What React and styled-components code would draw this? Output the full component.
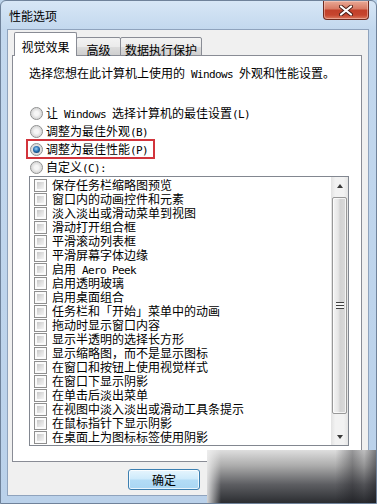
import React from "react";
import styled, { createGlobalStyle, css } from "styled-components";

const GlobalStyle = createGlobalStyle`
  html, body {
    margin: 0;
    padding: 0;
  }
  body {
    width: 377px;
    height: 504px;
    overflow: hidden;
    background: #bcd3ea;
    font-family: "Noto Sans CJK SC", sans-serif;
    font-size: 12px;
    color: #000;
  }
`;

const items = [
    "保存任务栏缩略图预览",
    "窗口内的动画控件和元素",
    "淡入淡出或滑动菜单到视图",
    "滑动打开组合框",
    "平滑滚动列表框",
    "平滑屏幕字体边缘",
    ["启用", " Aero Peek"],
    "启用透明玻璃",
    "启用桌面组合",
    "任务栏和「开始」菜单中的动画",
    "拖动时显示窗口内容",
    "显示半透明的选择长方形",
    "显示缩略图，而不是显示图标",
    "在窗口和按钮上使用视觉样式",
    "在窗口下显示阴影",
    "在单击后淡出菜单",
    "在视图中淡入淡出或滑动工具条提示",
    "在鼠标指针下显示阴影",
    "在桌面上为图标标签使用阴影",
];

function App() {
    return (
        <>
            <GlobalStyle />
            <Window>
                <TitleBar>
                    <Title>性能选项</Title>
                    <CloseButton>
                        <svg width="14" height="11" viewBox="0 0 14 11">
                            <path d="M2 1.5 L12 9.5 M12 1.5 L2 9.5" stroke="#4a1e16" strokeWidth="4" strokeLinecap="round" />
                            <path d="M2 1.5 L12 9.5 M12 1.5 L2 9.5" stroke="#ffffff" strokeWidth="2.2" strokeLinecap="round" />
                        </svg>
                    </CloseButton>
                </TitleBar>
                <Client>
                    <TabStrip>
                        <Tab active width={63}>视觉效果</Tab>
                        <Tab width={45}>高级</Tab>
                        <Tab width={82}>数据执行保护</Tab>
                    </TabStrip>
                    <Panel>
                        <Description>
                            选择您想在此计算机上使用的<Latin> Windows </Latin>外观和性能设置。
                        </Description>
                        <RadioGroup>
                            <RadioRow>
                                <Radio />
                                <Label>让<Latin> Windows </Latin>选择计算机的最佳设置<Latin>(L)</Latin></Label>
                            </RadioRow>
                            <RadioRow>
                                <Radio />
                                <Label>调整为最佳外观<Latin>(B)</Latin></Label>
                            </RadioRow>
                            <RadioRow highlight>
                                <Radio checked />
                                <Label>调整为最佳性能<Latin>(P)</Latin></Label>
                            </RadioRow>
                            <RadioRow>
                                <Radio />
                                <Label>自定义<Latin>(C):</Latin></Label>
                            </RadioRow>
                        </RadioGroup>
                        <ListBox>
                            <Items>
                                {items.map((item, index) => (
                                    <CheckRow key={index}>
                                        <Checkbox />
                                        {Array.isArray(item) ? (
                                            <Label>{item[0]}<Latin>{item[1]}</Latin></Label>
                                        ) : (
                                            <Label>{item}</Label>
                                        )}
                                    </CheckRow>
                                ))}
                            </Items>
                            <Scrollbar>
                                <ArrowButton><Arrow /></ArrowButton>
                                <Track>
                                    <Thumb><Grip /></Thumb>
                                </Track>
                                <ArrowButton><Arrow down /></ArrowButton>
                            </Scrollbar>
                        </ListBox>
                    </Panel>
                    <Footer>
                        <Button>确定</Button>
                    </Footer>
                </Client>
                <Smudge />
            </Window>
        </>
    );
}

const Window = styled.div`
    position: relative;
    width: 377px;
    height: 504px;
    box-sizing: border-box;
    display: flex;
    flex-direction: column;
    background: linear-gradient(to bottom, #d7e6f6 0px, #c3d8ee 28px, #bad1ea 100%);
    border: 1px solid #6f829a;
    border-radius: 6px 6px 0 0;
    overflow: hidden;
`;

const TitleBar = styled.div`
    height: 28px;
    flex: none;
    display: flex;
    align-items: flex-start;
`;

const Title = styled.div`
    padding: 8px 0 0 8px;
    line-height: 14px;
    font-size: 12px;
`;

const CloseButton = styled.div`
    margin-left: auto;
    margin-right: 7px;
    width: 46px;
    height: 19px;
    box-sizing: border-box;
    display: flex;
    align-items: center;
    justify-content: center;
    border: 1px solid #6e2b20;
    border-top: none;
    border-radius: 0 0 4px 4px;
    background: linear-gradient(to bottom, #e9a996 0%, #d97c66 42%, #c2402a 52%, #c6452e 78%, #db7a5f 100%);
    box-shadow: inset 0 0 0 1px rgba(255, 220, 210, 0.45);
`;

const Client = styled.div`
    flex: 1;
    margin: 0 7px 7px 6px;
    display: flex;
    flex-direction: column;
    background: #f0f0f0;
    border: 1px solid #8fa3bd;
`;

const TabStrip = styled.div`
    margin-top: 2px;
    padding-left: 6px;
    height: 24px;
    display: flex;
    align-items: flex-end;
    margin-bottom: -1px;
    position: relative;
    z-index: 1;
`;

const Tab = styled.div`
    width: ${(p) => p.width}px;
    box-sizing: border-box;
    text-align: center;
    line-height: 14px;
    border: 1px solid #898c95;
    border-bottom: none;
    border-radius: 2px 2px 0 0;
    margin-left: -1px;
    ${(p) =>
        p.active
            ? css`
                  height: 24px;
                  padding-top: 7px;
                  background: #fff;
                  margin-left: 0;
              `
            : css`
                  height: 19px;
                  padding-top: 5px;
                  background: linear-gradient(to bottom, #f3f3f3, #ebebeb 50%, #dddddd 51%, #cfcfcf);
                  border-bottom: 1px solid #898c95;
              `}
`;

const Panel = styled.div`
    height: 407px;
    box-sizing: border-box;
    margin: 0 6px 0 4px;
    padding: 10px 12px 0 16px;
    background: #fff;
    border: 1px solid #898c95;
`;

const Latin = styled.span`
    font-family: "DejaVu Sans Mono", monospace;
    font-size: 11px;
    letter-spacing: -0.62px;
`;

const Label = styled.span`
    display: block;
    height: 14px;
    line-height: 14px;
    white-space: nowrap;
`;

const Description = styled.div`
    height: 14px;
    line-height: 14px;
    margin-bottom: 24px;
    white-space: nowrap;
`;

const RadioGroup = styled.div`
    display: flex;
    flex-direction: column;
`;

const RadioRow = styled.div`
    height: 18px;
    display: flex;
    align-items: center;
    width: fit-content;
    ${(p) =>
        p.highlight &&
        css`
            margin-left: -2px;
            padding: 0 6px 0 2px;
            outline: 2px solid #d2343c;
            outline-offset: -1px;
        `}
`;

const Radio = styled.span`
    position: relative;
    width: 13px;
    height: 13px;
    flex: none;
    box-sizing: border-box;
    margin: 0 3px 0 1px;
    border-radius: 50%;
    border: 1px solid #8e8f8f;
    background: radial-gradient(circle at 50% 50%, #f6f6f6 0 2px, #dadada 5px, #f0f0f0 6px);
    ${(p) =>
        p.checked &&
        css`
            &::after {
                content: "";
                position: absolute;
                left: 2px;
                top: 2px;
                width: 7px;
                height: 7px;
                border-radius: 50%;
                background: radial-gradient(circle at 45% 40%, #9fd4f7 0, #2a73b5 45%, #0f3f70 80%);
            }
        `}
`;

const ListBox = styled.div`
    width: 320px;
    height: 270px;
    box-sizing: border-box;
    border: 1px solid #828790;
    display: flex;
    background: #fff;
    overflow: hidden;
`;

const Items = styled.div`
    flex: 1;
    padding: 1px 0 0 4px;
    overflow: hidden;
`;

const CheckRow = styled.div`
    height: 14px;
    display: flex;
    align-items: center;
`;

const Checkbox = styled.span`
    width: 13px;
    height: 13px;
    flex: none;
    box-sizing: border-box;
    margin-right: 5px;
    padding: 2px;
    border: 1px solid #8f8f8f;
    background: linear-gradient(135deg, #c9c9c9, #e2e2e2 55%, #f4f4f4) content-box, #fbfbfb;
`;

const Scrollbar = styled.div`
    width: 17px;
    flex: none;
    display: flex;
    flex-direction: column;
    background: linear-gradient(to right, #e2e2e2, #f2f2f2 25%, #f2f2f2 75%, #e4e4e4);
`;

const ArrowButton = styled.div`
    height: 17px;
    flex: none;
    display: flex;
    align-items: center;
    justify-content: center;
`;

const Arrow = styled.span`
    width: 0;
    height: 0;
    border-left: 3.5px solid transparent;
    border-right: 3.5px solid transparent;
    ${(p) =>
        p.down
            ? css`
                  border-top: 4px solid #3a3a3a;
              `
            : css`
                  border-bottom: 4px solid #3a3a3a;
              `}
`;

const Track = styled.div`
    flex: 1;
    padding-top: 3px;
`;

const Thumb = styled.div`
    height: 217px;
    box-sizing: border-box;
    margin: 0 1px;
    border: 1px solid #989898;
    border-radius: 2px;
    background: linear-gradient(to right, #f4f4f4, #e6e6e6 40%, #d2d2d2 55%, #dadada);
    box-shadow: inset 0 0 0 1px rgba(255, 255, 255, 0.7);
    display: flex;
    align-items: center;
    justify-content: center;
`;

const Grip = styled.span`
    width: 8px;
    height: 7px;
    background: repeating-linear-gradient(to bottom, #404040 0 1px, #f6f6f6 1px 3px);
`;

const Footer = styled.div`
    flex: 1;
    padding: 7px 0 0 120px;
`;

const Button = styled.div`
    width: 72px;
    height: 21px;
    box-sizing: border-box;
    display: flex;
    align-items: center;
    justify-content: center;
    border: 1px solid #3c7fb1;
    border-radius: 3px;
    background: linear-gradient(to bottom, #e6f5fd, #cdeafb 48%, #b3dcf6 52%, #a9d6f3);
    box-shadow: inset 0 0 0 1px rgba(255, 255, 255, 0.75);
`;

const Smudge = styled.div`
    position: absolute;
    left: 206px;
    top: 449px;
    right: 0;
    bottom: 0;
    background: linear-gradient(to right, rgba(240, 240, 240, 0.85) 0px, rgba(240, 240, 240, 0) 14px),
        linear-gradient(to right, rgba(0, 0, 0, 0) 0%, rgba(0, 0, 0, 0) 76%, rgba(20, 20, 25, 0.35) 86%, rgba(20, 20, 25, 0.15) 93%, rgba(20, 20, 25, 0.5) 100%),
        linear-gradient(to bottom, #dedede 0%, #ababab 30%, #5d5e62 65%, #2b2d31 100%);
`;

export default App;
